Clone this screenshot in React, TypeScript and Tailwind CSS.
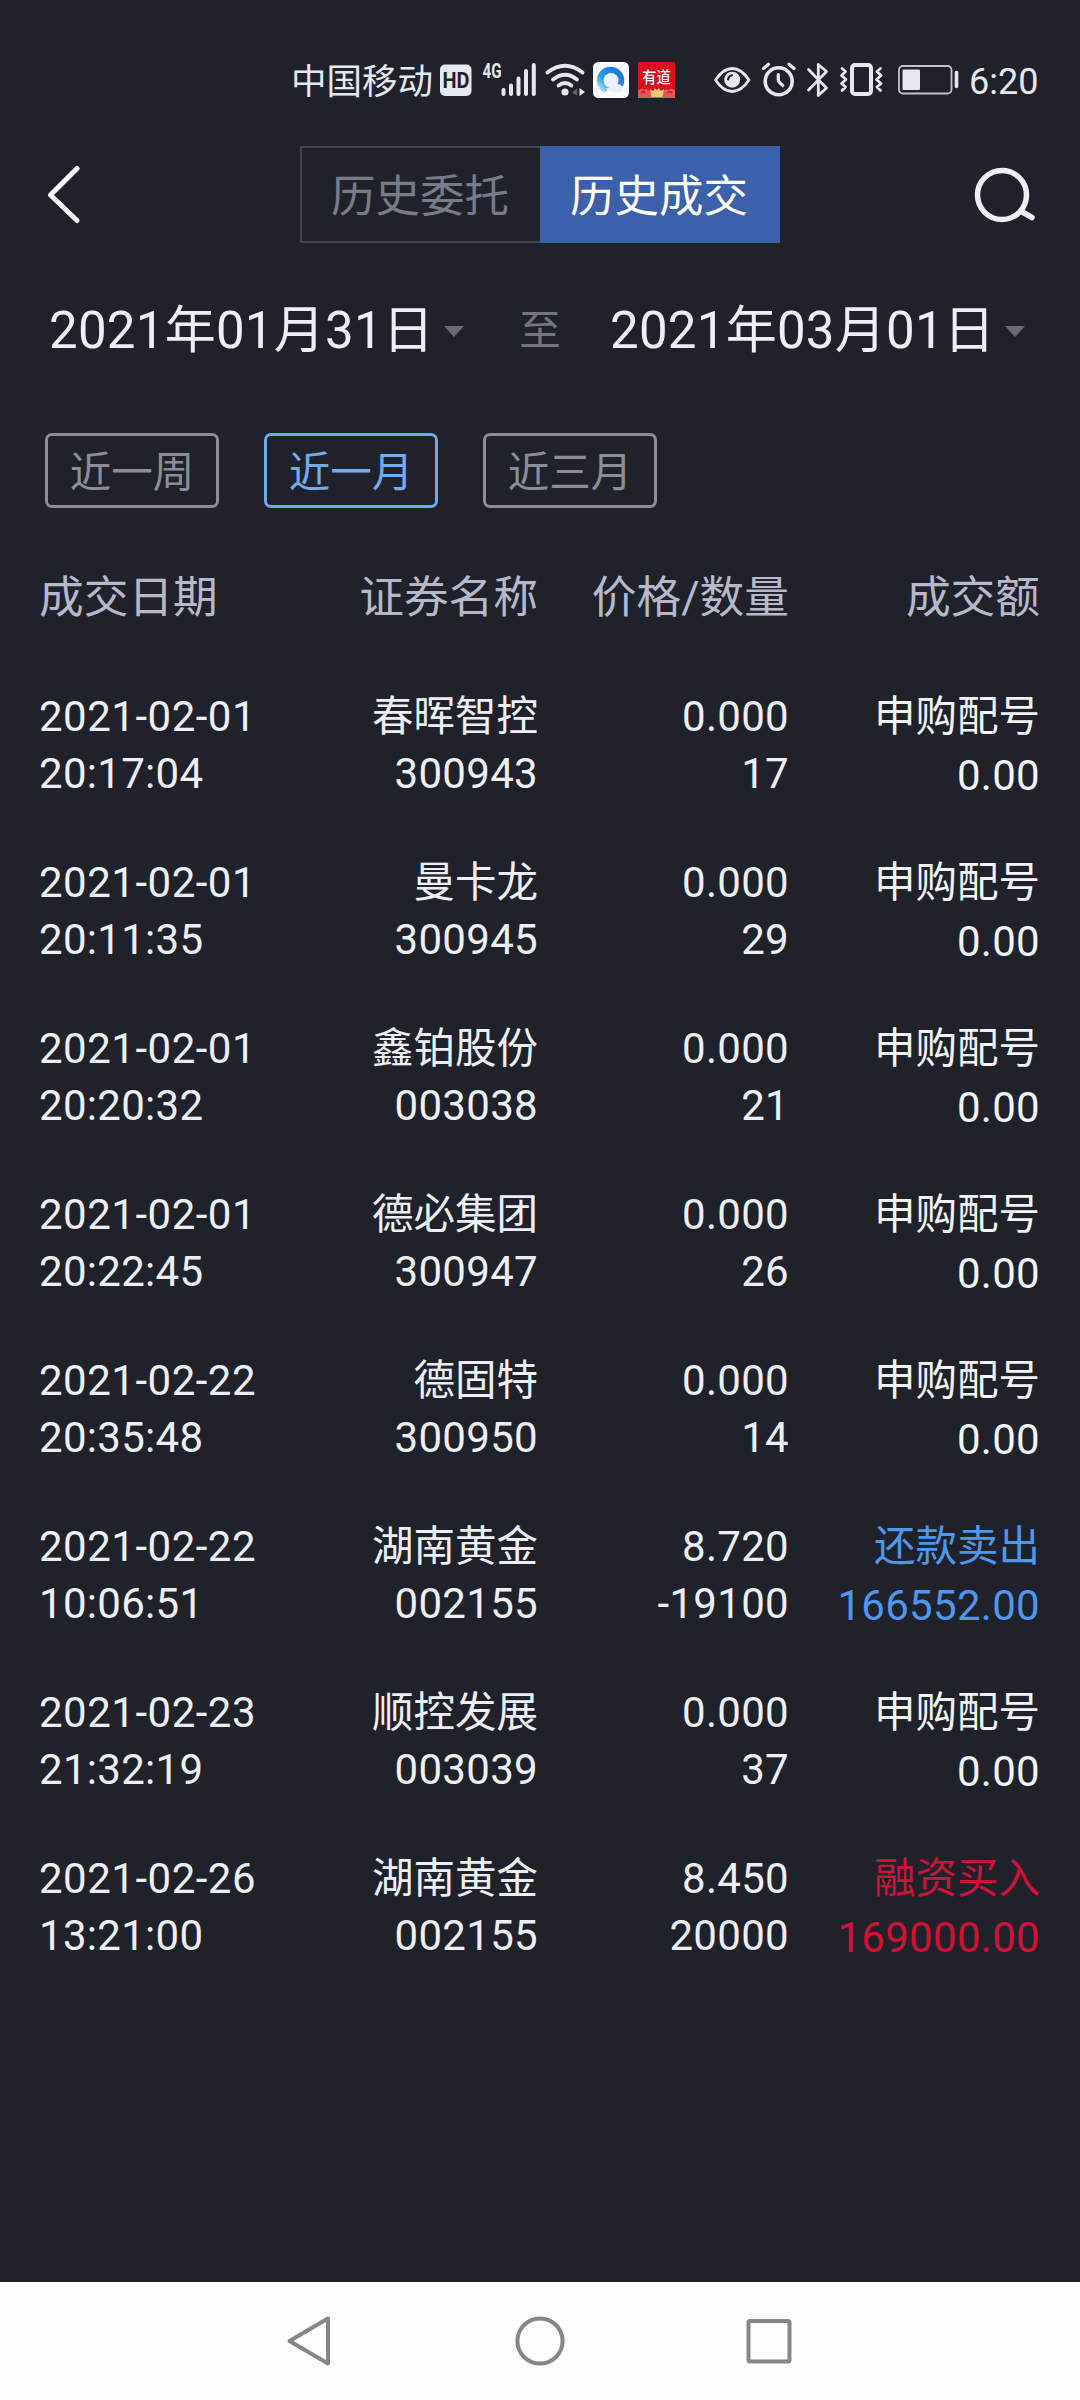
import { useState } from 'react';
import clsx from 'clsx';

type Side = 'none' | 'sell' | 'buy';

interface Deal {
  date: string;
  time: string;
  name: string;
  code: string;
  price: string;
  qty: string;
  type: string;
  amount: string;
  side: Side;
}

const DEALS: Deal[] = [
  { date: '2021-02-01', time: '20:17:04', name: '春晖智控', code: '300943', price: '0.000', qty: '17', type: '申购配号', amount: '0.00', side: 'none' },
  { date: '2021-02-01', time: '20:11:35', name: '曼卡龙', code: '300945', price: '0.000', qty: '29', type: '申购配号', amount: '0.00', side: 'none' },
  { date: '2021-02-01', time: '20:20:32', name: '鑫铂股份', code: '003038', price: '0.000', qty: '21', type: '申购配号', amount: '0.00', side: 'none' },
  { date: '2021-02-01', time: '20:22:45', name: '德必集团', code: '300947', price: '0.000', qty: '26', type: '申购配号', amount: '0.00', side: 'none' },
  { date: '2021-02-22', time: '20:35:48', name: '德固特', code: '300950', price: '0.000', qty: '14', type: '申购配号', amount: '0.00', side: 'none' },
  { date: '2021-02-22', time: '10:06:51', name: '湖南黄金', code: '002155', price: '8.720', qty: '-19100', type: '还款卖出', amount: '166552.00', side: 'sell' },
  { date: '2021-02-23', time: '21:32:19', name: '顺控发展', code: '003039', price: '0.000', qty: '37', type: '申购配号', amount: '0.00', side: 'none' },
  { date: '2021-02-26', time: '13:21:00', name: '湖南黄金', code: '002155', price: '8.450', qty: '20000', type: '融资买入', amount: '169000.00', side: 'buy' },
];

const SIDE_COLOR: Record<Side, string> = {
  none: 'text-[#f2f3f8]',
  sell: 'text-[#4f97ea]',
  buy: 'text-[#cf1238]',
};

const TABS = ['历史委托', '历史成交'];
const RANGES = ['近一周', '近一月', '近三月'];

export default function App() {
  const [tab, setTab] = useState(1);
  const [range, setRange] = useState(1);

  return (
    <div className="flex h-[2400px] w-[1080px] flex-col overflow-hidden bg-[#20222b] font-['Roboto','Noto_Sans_CJK_SC',sans-serif] text-[#eeeff6]">
      <StatusBar />

      {/* header */}
      <header className="flex h-[97px] shrink-0 items-center justify-between pr-[42px] pl-[46px]">
        <button aria-label="返回" className="w-[254px]">
          <svg className="h-[60px] w-9" viewBox="46 166 36 60" fill="none">
            <path d="M77 169.5 50.5 196 77 221.5" stroke="#f4f5fa" strokeWidth="5" strokeLinecap="round" strokeLinejoin="round" />
          </svg>
        </button>
        <div className="flex h-full w-[480px]">
          {TABS.map((label, i) => (
            <button
              key={label}
              onClick={() => setTab(i)}
              className={clsx(
                'w-1/2 pt-[5px] pr-0.5 text-[44.5px] leading-none',
                tab === i ? 'bg-[#3b61aa] text-white' : 'border-2 border-r-0 border-[#42444f] text-[#797b88]',
              )}
            >
              {label}
            </button>
          ))}
        </div>
        <button aria-label="搜索" className="flex w-[258px] justify-end">
          <svg className="h-[60px] w-[66px]" viewBox="972 165 66 60" fill="none" stroke="#eeeff5">
            <circle cx="1002" cy="195" r="24.5" strokeWidth="5.5" />
            <path d="m1021.5 211.5 10.5 6" strokeWidth="5.5" strokeLinecap="round" />
          </svg>
        </button>
      </header>

      {/* date range */}
      <div className="flex h-[172px] shrink-0 items-center pt-0.5 pl-[49px]">
        <DateField value="2021年01月31日" />
        <span className="w-[146px] pt-0.5 pl-1.5 text-center text-[41.5px] leading-none text-[#74767f]">至</span>
        <DateField value="2021年03月01日" />
      </div>

      {/* quick range */}
      <div className="mt-[18px] flex shrink-0 gap-[45px] pl-[45px]">
        {RANGES.map((label, i) => (
          <button
            key={label}
            onClick={() => setRange(i)}
            className={clsx(
              'h-[75px] w-[174px] rounded-[7px] border-3 pt-[5px] text-[41.5px] leading-none',
              range === i ? 'border-[#75aae8] text-[#74aaf0]' : 'border-[#8b8d99] text-[#8b8d99]',
            )}
          >
            {label}
          </button>
        ))}
      </div>

      {/* deal table */}
      <main className="flex-1 pr-[40px] pl-[39px]">
        <div className="grid h-[180px] grid-cols-[250px_249px_251px_251px] items-center text-right text-[44.7px] leading-none text-[#b7b9ca]">
          <span className="text-left">成交日期</span>
          <span>证券名称</span>
          <span>价格/数量</span>
          <span>成交额</span>
        </div>
        {DEALS.map((d) => (
          <DealRow key={d.date + d.time} deal={d} />
        ))}
      </main>

      <NavBar />
    </div>
  );
}

function DateField({ value }: { value: string }) {
  return (
    <button className="flex items-center text-[51px] leading-none">
      <span className="w-[395px] text-left tracking-[0.25px] whitespace-nowrap">{value}</span>
      <svg className="mt-0.5 h-[11px] w-5" viewBox="0 0 20 11">
        <path d="M0 0h20L10 11z" fill="#696b72" />
      </svg>
    </button>
  );
}

function DealRow({ deal }: { deal: Deal }) {
  return (
    <div className="grid h-[166px] grid-cols-[250px_249px_251px_251px] text-right text-[42px] leading-[57px] tracking-[0.3px]">
      <div className="text-left">
        <p className="tracking-[0.5px]">{deal.date}</p>
        <p>{deal.time}</p>
      </div>
      <div>
        <p className="text-[41.5px] tracking-normal">{deal.name}</p>
        <p>{deal.code}</p>
      </div>
      <div>
        <p>{deal.price}</p>
        <p>{deal.qty}</p>
      </div>
      <div className={SIDE_COLOR[deal.side]}>
        <p className="text-[41.5px] tracking-normal">{deal.type}</p>
        <p className="pt-0.5">{deal.amount}</p>
      </div>
    </div>
  );
}

function StatusBar() {
  return (
    <div className="flex h-[146px] shrink-0 items-center pt-[14px] pl-[291px] text-[#e6e8f1]">
      <span className="w-[148px] pt-[5px] text-[35.5px] leading-none whitespace-nowrap">中国移动</span>

      {/* HD, 4G, signal bars, wifi */}
      <svg className="h-10 w-[148px]" viewBox="439 60 148 40" fill="none">
        <rect x="440" y="64.5" width="31.5" height="31.5" rx="5" fill="#e6e8f1" />
        <text x="442.5" y="88" fontSize="21.5" fontWeight="700" fill="#20222b" textLength="27" lengthAdjust="spacingAndGlyphs">HD</text>
        <text x="482.5" y="78" fontSize="20.5" fontWeight="700" fill="#e6e8f1" textLength="19" lengthAdjust="spacingAndGlyphs">4G</text>
        <path d="M503.5 90v4M511 85.5V94M518.5 78.5V94M526 71v23M533.8 65v29" stroke="#e6e8f1" strokeWidth="4" strokeLinecap="round" />
        <g stroke="#e6e8f1" strokeWidth="3.8" strokeLinecap="round">
          <path d="M547.5 72.5q17.5-13.5 35 0" />
          <path d="M553 79.5q12-9.5 24 0" />
          <path d="M558.5 85.5q6.5-5 13 0" />
        </g>
        <circle cx="565" cy="92" r="3.6" fill="#e6e8f1" />
        <path d="M572 92.5l5-4v7z" fill="#666873" />
        <path d="M579.5 88v8l5.5-4z" fill="#e6e8f1" />
      </svg>

      <BrowserIcon />
      <YoudaoIcon />

      {/* eye, alarm, bluetooth, vibrate, battery */}
      <svg className="ml-[37px] h-10 w-[250px]" viewBox="712 60 250 40" fill="none" stroke="#e6e8f1" strokeLinecap="round" strokeLinejoin="round">
        <path d="M715.5 80c5-7.500 10.500-11.500 16.700-11.500S744 72.500 749 80c-5 7.500-10.600 11.500-16.800 11.500S720.500 87.500 715.500 80z" strokeWidth="2.8" />
        <circle cx="732.2" cy="79.7" r="8" fill="#e6e8f1" stroke="none" />
        <path d="M728 79.500q.5-3.500 4-4.200" stroke="#20222b" strokeWidth="2" />

        <circle cx="778.7" cy="81.3" r="13.5" strokeWidth="3.6" />
        <path d="M763.5 68.500l5-4.200M794 68.500l-5-4.200" strokeWidth="3.3" />
        <path d="M778.3 74.500v6.700l4.500 4.500" strokeWidth="3.2" />

        <path d="M808.5 69.500 826.500 88l-8.200 7.500v-31l8.200 7L808.500 90" strokeWidth="2.8" />

        <rect x="852" y="65" width="19" height="29" rx="3" strokeWidth="4" />
        <path d="M842 68.500l3.500 3-4 4 4.500 4-4.500 4 4 3.500-3.500 3.500M880.500 68.500l-3.500 3 4 4-4.500 4 4.500 4-4 3.500 3.500 3.500" strokeWidth="2.8" />

        <rect x="899" y="66" width="52.5" height="27.5" rx="4" strokeWidth="1.8" stroke="#c3c5ce" />
        <rect x="902.5" y="69.5" width="17.5" height="20.5" rx="1" fill="#e6e8f1" stroke="none" />
        <path d="M956.5 72.500v14" strokeWidth="3.6" />
      </svg>

      <span className="ml-[7px] pt-[3px] text-[36px] leading-none">6:20</span>
    </div>
  );
}

function BrowserIcon() {
  return (
    <svg className="ml-1.5 h-9 w-9" viewBox="0 0 36 36">
      <defs>
        <linearGradient id="ring" x1="0.1" y1="0.9" x2="0.8" y2="0.2">
          <stop offset="0" stopColor="#d3ecfc" />
          <stop offset="0.4" stopColor="#2f9bea" />
          <stop offset="1" stopColor="#1c76dc" />
        </linearGradient>
      </defs>
      <rect width="36" height="36" rx="5.5" fill="#fbfcff" />
      <circle cx="17.5" cy="18.5" r="13.7" fill="url(#ring)" />
      <path d="M20 20l12 5.500-1 9H16c-4-1-5-4-2-6z" fill="#fbfcff" />
      <path d="M12 26c6 1 11 0 15-4l4 6q-9 6-19-2z" fill="#e6f0fa" />
      <circle cx="18" cy="18.5" r="7.5" fill="#eaf2fb" />
    </svg>
  );
}

function YoudaoIcon() {
  return (
    <svg className="ml-[9px] h-9 w-[37px]" viewBox="0 0 37 36">
      <rect width="37" height="36" rx="1" fill="#d90f1e" />
      <path d="M0 29q3-4 6-1 3-2 6 1h13q3-3 6-1 3-3 6 1v7H0z" fill="#e2575a" />
      <path d="M3 31q2-3 4 0M30 31q2-3 4 0" fill="none" stroke="#cf0f20" strokeWidth="1.5" />
      <path d="M12 27l3 2 2-3 2 2 2-2 2 3 3-2-1.500 8h-11z" fill="#f7c877" />
      <text x="4.2" y="21" fontSize="16" fontWeight="500" fill="#fff" textLength="28.5" lengthAdjust="spacingAndGlyphs">有道</text>
    </svg>
  );
}

function NavBar() {
  return (
    <nav className="flex h-[118px] shrink-0 items-center justify-between bg-[#fcfdfd] px-[284px]">
      <svg className="h-[54px] w-[54px]" viewBox="284 2314 54 54" fill="none">
        <path d="M328 2318.500v45L289.500 2341z" stroke="#868686" strokeWidth="4" strokeLinejoin="round" />
      </svg>
      <svg className="h-[54px] w-[54px]" viewBox="0 0 54 54" fill="none">
        <circle cx="27" cy="27" r="22.6" stroke="#868686" strokeWidth="4" />
      </svg>
      <svg className="h-[54px] w-[54px]" viewBox="742 2314 54 54" fill="none">
        <rect x="748.5" y="2321" width="41" height="40.5" rx="1.5" stroke="#868686" strokeWidth="4" />
      </svg>
    </nav>
  );
}
